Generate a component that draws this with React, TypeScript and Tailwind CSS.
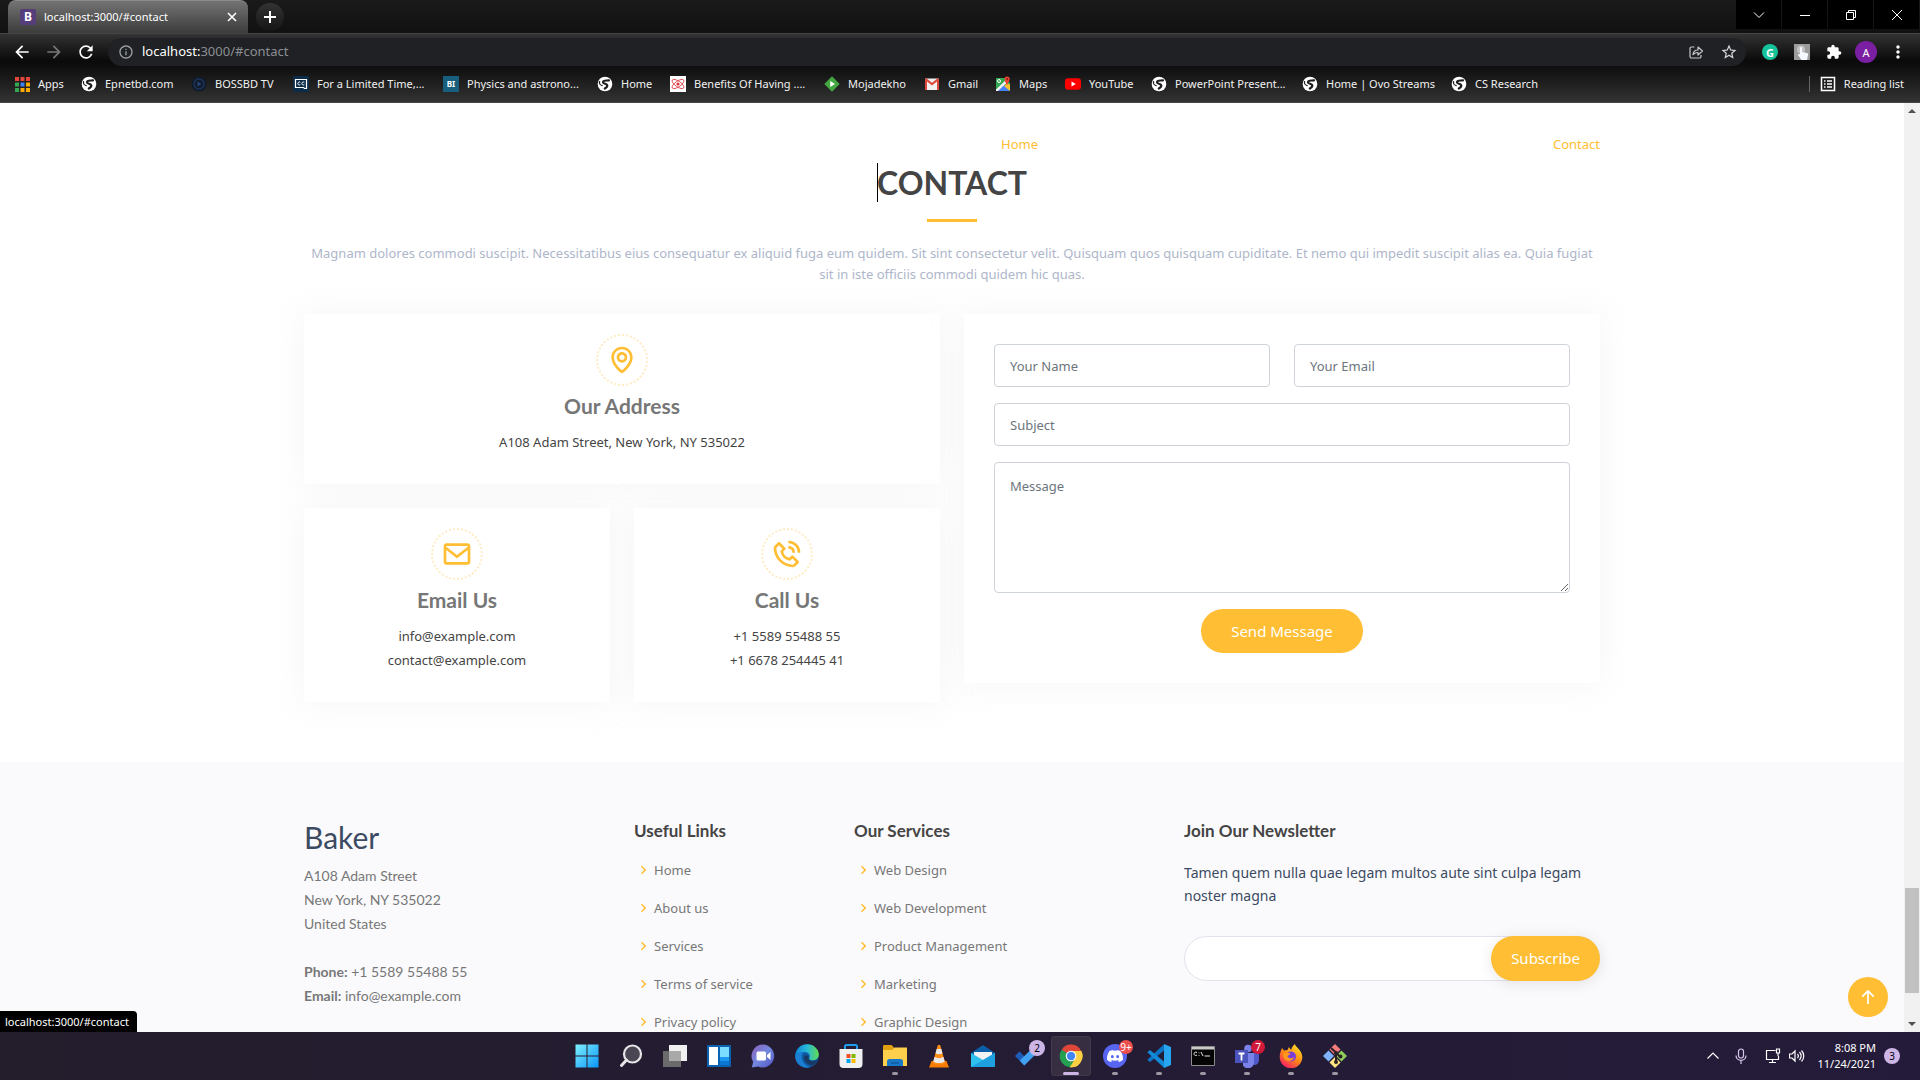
import type { ReactNode } from "react";
import { BiMap, BiEnvelope, BiPhoneCall, BiChevronRight } from "react-icons/bi";
import { BsArrowUpShort } from "react-icons/bs";
import { SiDiscord } from "react-icons/si";
import {
  MdArrowBack,
  MdArrowForward,
  MdExtension,
  MdInfoOutline,
  MdMoreVert,
  MdRefresh,
  MdStarBorder,
} from "react-icons/md";

/* ---------- bookmark icons ---------- */

const Globe = () => (
  <svg viewBox="0 0 16 16" className="size-4 shrink-0">
    <circle cx="8" cy="8" r="7.3" fill="#fff" />
    <path
      d="M12 4.300C9.500 4.800 6 3.800 6 6.200c0 2 4 1.100 4.300 3.200.2 1.500-1.100 2.300-2.500 3.100"
      fill="none"
      stroke="#1c1c1c"
      strokeWidth="2.200"
      strokeLinecap="round"
    />
    <path d="M2.600 5.500C2 8 3 9 5.200 9.600" fill="none" stroke="#1c1c1c" strokeWidth="1.200" strokeLinecap="round" />
  </svg>
);

const AppsGrid = () => (
  <svg viewBox="0 0 16 16" className="size-4 shrink-0">
    <path d="M1 1h4v4H1zM6.500 1h4v4h-4zM12 1h4v4h-4z" fill="#e8453c" />
    <path d="M1 6.500h4v4H1z" fill="#34a853" />
    <path d="M6.500 6.500h4v4h-4z" fill="#3b82f6" />
    <path d="M12 6.500h4v4h-4z" fill="#f9ab00" />
    <path d="M1 12h4v4H1z" fill="#34a853" />
    <path d="M6.500 12h4v4h-4zM12 12h4v4h-4z" fill="#f9ab00" />
  </svg>
);

const TvDisc = () => (
  <svg viewBox="0 0 16 16" className="size-4 shrink-0">
    <circle cx="8" cy="8" r="7.500" fill="#101a2b" />
    <circle cx="8" cy="8" r="5" fill="none" stroke="#1d3458" strokeWidth="1.500" />
    <path d="M6.500 5.500l4 2.500-4 2.500z" fill="#24477c" />
  </svg>
);

const CcBoard = () => (
  <svg viewBox="0 0 16 16" className="size-4 shrink-0">
    <rect width="16" height="16" rx="1" fill="#0d2c4a" />
    <path d="M2.500 3.500h11v9h-2l-1-1h-8z" fill="none" stroke="#fff" strokeWidth="1.200" />
    <path d="M7.300 6.300a1.500 1.500 0 1 0 0 2.400M11.300 6.300a1.500 1.500 0 1 0 0 2.400" fill="none" stroke="#fff" />
  </svg>
);

const BiSquare = () => (
  <span className="grid size-4 shrink-0 place-items-center bg-[#185f7d] text-[8px] leading-none font-bold text-white">
    BI
  </span>
);

const Atom = () => (
  <svg viewBox="0 0 16 16" className="size-4 shrink-0">
    <rect width="16" height="16" fill="#fff" />
    <g fill="none" stroke="#d9363e" strokeWidth=".8">
      <ellipse cx="8" cy="8" rx="7" ry="2.800" transform="rotate(35 8 8)" />
      <ellipse cx="8" cy="8" rx="7" ry="2.800" transform="rotate(-35 8 8)" />
    </g>
    <circle cx="8" cy="8" r="1.600" fill="#d9363e" />
  </svg>
);

const GreenDiamond = () => (
  <svg viewBox="0 0 16 16" className="size-4 shrink-0">
    <path d="M8 .3L15.700 8 8 15.700.3 8z" fill="#43a842" />
    <path d="M6.200 5l4.800 3-4.800 3z" fill="#fff" />
  </svg>
);

const Gmail = () => (
  <svg viewBox="0 0 16 16" className="size-4 shrink-0">
    <rect x="1" y="2.500" width="14" height="11.500" rx="1" fill="#f1f1f1" />
    <path d="M1 3.500V14h2V5.500l5 4 5-4V14h2V3.500c0-1-1.200-1.300-2-.7L8 6.800 3 2.800c-.8-.6-2-.3-2 .7z" fill="#dd4b3e" />
  </svg>
);

const Maps = () => (
  <svg viewBox="0 0 16 16" className="size-4 shrink-0">
    <path d="M1 2h10l4 5v8H1z" fill="#34a853" />
    <path d="M1 15L8.500 7.500 15 14v1z" fill="#4285f4" />
    <path d="M1 13.500L12 3l1.500 2L3 15H1z" fill="#f4f4f4" />
    <path d="M9 10l6 5V8.500l-3-1z" fill="#fbc02d" />
    <circle cx="4" cy="5" r="1.500" fill="none" stroke="#fff" />
    <path d="M12 9.500C11.500 7 9.500 6 9.500 3.200a2.600 2.600 0 0 1 5.200 0C14.700 6 12.500 7 12 9.500z" fill="#ea4335" />
    <circle cx="12.100" cy="3.200" r="1" fill="#8c1f16" />
  </svg>
);

const YouTube = () => (
  <svg viewBox="0 0 16 16" className="size-4 shrink-0">
    <rect y="2.300" width="16" height="11.500" rx="3" fill="#f00" />
    <path d="M6.500 5.500L10.800 8l-4.300 2.500z" fill="#fff" />
  </svg>
);

const bookmarks: { label: string; icon: ReactNode; width: string }[] = [
  { label: "Apps", icon: <AppsGrid />, width: "w-[67px]" },
  { label: "Epnetbd.com", icon: <Globe />, width: "w-[110px]" },
  { label: "BOSSBD TV", icon: <TvDisc />, width: "w-[102px]" },
  { label: "For a Limited Time,...", icon: <CcBoard />, width: "w-[150px]" },
  { label: "Physics and astrono...", icon: <BiSquare />, width: "w-[154px]" },
  { label: "Home", icon: <Globe />, width: "w-[73px]" },
  { label: "Benefits Of Having ....", icon: <Atom />, width: "w-[154px]" },
  { label: "Mojadekho", icon: <GreenDiamond />, width: "w-[100px]" },
  { label: "Gmail", icon: <Gmail />, width: "w-[71px]" },
  { label: "Maps", icon: <Maps />, width: "w-[70px]" },
  { label: "YouTube", icon: <YouTube />, width: "w-[86px]" },
  { label: "PowerPoint Present...", icon: <Globe />, width: "w-[151px]" },
  { label: "Home | Ovo Streams", icon: <Globe />, width: "w-[149px]" },
  { label: "CS Research", icon: <Globe />, width: "w-[110px]" },
];

/* ---------- browser frame ---------- */

const windowButtons = [
  { label: "Search tabs", path: "M1 3.500l5 5 5-5" },
  { label: "Minimize", path: "M1 6.500h10" },
  { label: "Restore", path: "M1.500 3.500h7v7h-7zM3.500 3.500v-2h7v7h-2" },
  { label: "Close", path: "M1 1l10 10M11 1L1 11" },
];

function TabStrip() {
  return (
    <div className="flex h-[33px] shrink-0 items-start bg-linear-to-b from-[#1a1a1a] to-[#111]">
      <div className="ml-2 flex h-[33px] w-60 items-center gap-2 rounded-t-lg border-t border-[#8a8a8a] bg-linear-to-b from-[#747474] to-[#3c3c3c] pr-2.5 pl-3">
        <span className="grid size-4 place-items-center rounded-xs bg-[#563d7c] text-xs leading-none font-bold text-white">
          B
        </span>
        <span className="flex-1 text-[11px] text-white">localhost:3000/#contact</span>
        <button aria-label="Close tab">
          <svg viewBox="0 0 12 12" className="size-3">
            <path d="M2 2l8 8M10 2l-8 8" stroke="#fff" strokeWidth="1.600" />
          </svg>
        </button>
      </div>
      <button aria-label="New tab" className="mt-[3px] ml-2 grid size-7 place-items-center rounded-full bg-linear-to-b from-[#333] to-[#161616]">
        <svg viewBox="0 0 12 12" className="size-3">
          <path d="M6 0v12M0 6h12" stroke="#fff" strokeWidth="2" />
        </svg>
      </button>
      <div className="mr-px ml-auto flex gap-px">
        {windowButtons.map((b) => (
          <button key={b.label} aria-label={b.label} className="grid h-[29px] w-[45px] place-items-center bg-black">
            <svg viewBox="0 0 12 12" className="size-3">
              <path d={b.path} fill="none" stroke="#fff" />
            </svg>
          </button>
        ))}
      </div>
    </div>
  );
}

function Toolbar() {
  return (
    <div className="flex h-[33px] shrink-0 items-center border-t border-[#444] bg-linear-to-b from-[#333] via-[#0a0a0a] via-85% to-[#0e0e0e] pt-1 text-white">
      <button aria-label="Back" className="ml-3">
        <MdArrowBack className="size-5" />
      </button>
      <button aria-label="Forward" className="ml-3 text-[#777]">
        <MdArrowForward className="size-5" />
      </button>
      <button aria-label="Reload" className="ml-3">
        <MdRefresh className="size-5" />
      </button>
      <div className="ml-3 flex h-7 flex-1 items-center rounded-full bg-[#202124] pr-2 pl-2.5">
        <MdInfoOutline className="size-4 text-[#9aa0a6]" />
        <p className="ml-2 flex-1 text-[13px] text-[#8b8f94]">
          <span className="text-white">localhost:</span>3000/#contact
        </p>
        <button aria-label="Share">
          <svg viewBox="0 0 16 16" className="size-4" fill="none" stroke="#c4c7cb" strokeWidth="1.200">
            <path d="M6.500 3H3.500A1.500 1.500 0 0 0 2 4.500v8A1.500 1.500 0 0 0 3.500 14h8a1.500 1.500 0 0 0 1.500-1.500V11" />
            <path d="M5 10.500c.3-3 2-4.500 5-4.500V3l4.500 4L10 11V8.500C8 8.500 6.500 9 5 10.500z" strokeLinejoin="round" />
          </svg>
        </button>
        <button aria-label="Bookmark this page" className="ml-4">
          <MdStarBorder className="size-[18px] text-[#d5d7da]" />
        </button>
      </div>
      <div className="flex items-center gap-4 pr-3.5 pl-4">
        <button aria-label="Writing assistant" className="grid size-4 place-items-center rounded-full bg-[#15c39a] text-[11px] leading-none font-bold">
          G
        </button>
        <button aria-label="Click extension">
          <svg viewBox="0 0 16 16" className="size-4">
            <rect width="16" height="16" fill="#9b9b9b" />
            <circle cx="7" cy="5.500" r="4" fill="#c4c4c4" />
            <path d="M6 4c0-1.500 2-1.500 2 0v4l5 1c1 .3 1.300 1 1 2l-1 5H7.500L4 11c-.5-1 .8-1.600 2-.5z" fill="#f5f8ff" />
          </svg>
        </button>
        <button aria-label="Extensions">
          <MdExtension className="size-4" />
        </button>
        <button aria-label="Profile" className="-mx-[3px] grid size-[22px] place-items-center rounded-full bg-[#7b1fa2] text-[11px] leading-none">
          A
        </button>
        <button aria-label="Menu" className="-mx-0.5">
          <MdMoreVert className="size-5" />
        </button>
      </div>
    </div>
  );
}

function BookmarksBar() {
  return (
    <div className="flex h-[37px] shrink-0 items-center border-b border-[#444] bg-linear-to-b from-[#0e0e0e] to-[#333] pl-3.5 text-[11px] text-[#f1f1f1]">
      {bookmarks.map((b, i) => (
        <a key={i} href="#contact" className={"flex shrink-0 items-center gap-2 whitespace-nowrap " + b.width}>
          {b.icon}
          {b.label}
        </a>
      ))}
      <button className="ml-auto flex items-center gap-2 border-l border-[#666] pr-4 pl-2.5 whitespace-nowrap">
        <svg viewBox="0 0 16 16" className="size-4" fill="none" stroke="#fff" strokeWidth="1.500">
          <path d="M1.500 1.500h13v13h-13z" />
          <path d="M4 5h1.500M4 8h1.500M4 11h1.500M7 5h5M7 8h5M7 11h5" />
        </svg>
        Reading list
      </button>
    </div>
  );
}

/* ---------- web page ---------- */

const card = "bg-white shadow-[0_0_30px_rgba(214,215,216,0.25)]";
const field =
  "w-full rounded border border-[#ced4da] bg-white px-[15px] text-[13px] text-[#444] placeholder:text-[#6c757d] focus:outline-none";

function InfoCard({ icon, title, lines, className }: { icon: ReactNode; title: string; lines: string[]; className?: string }) {
  return (
    <div className={card + " flex flex-col items-center pt-5 pb-[30px] " + (className ?? "")}>
      <span className="grid size-[52px] place-items-center rounded-full border-2 border-dotted border-[#ffecc2] text-[32px] text-[#ffbe33]">
        {icon}
      </span>
      <h3 className="mt-2 mb-3 font-[Lato] text-[21px] leading-6 font-bold text-[#777]">{title}</h3>
      {lines.map((l) => (
        <p key={l} className="text-[13px] leading-6">
          {l}
        </p>
      ))}
    </div>
  );
}

function LinkColumn({ title, links }: { title: string; links: string[] }) {
  return (
    <div>
      <h4 className="font-[Lato] text-[17px] leading-[18px] font-bold">{title}</h4>
      <ul className="mt-[21px] flex flex-col gap-5">
        {links.map((l) => (
          <li key={l} className="flex items-center">
            <BiChevronRight className="size-[18px] text-[#ffbe33]" />
            <a href="#contact" className="ml-0.5 text-[13px] leading-[18px] text-[#777]">
              {l}
            </a>
          </li>
        ))}
      </ul>
    </div>
  );
}

function ContactPage() {
  return (
    <div className="relative min-w-0 flex-1 overflow-hidden bg-white text-[#444]">
      <div className="mx-auto max-w-[1320px] px-3">
        <header className="flex justify-end pt-8">
          <nav className="flex w-[599px] justify-between text-[13px] leading-[18px] text-[#ffbe33]">
            <a href="#home">Home</a>
            <a href="#contact">Contact</a>
          </nav>
        </header>
        <section id="contact" className="pt-[11px] pb-[60px]">
          <h2 className="text-center font-[Lato] text-[32px] leading-[38px] font-bold">
            <span className="relative">
              <span className="absolute inset-y-0 left-0 w-px bg-black" />
              CONTACT
            </span>
          </h2>
          <div className="mx-auto mt-[17px] h-[3px] w-[50px] bg-[#ffbe33]" />
          <p className="mt-[21px] text-center text-[13px] leading-[21px] text-[#aeb6ca]">
            Magnam dolores commodi suscipit. Necessitatibus eius consequatur ex aliquid fuga eum quidem. Sit sint
            consectetur velit. Quisquam quos quisquam cupiditate. Et nemo qui impedit suscipit alias ea. Quia fugiat sit in
            iste officiis commodi quidem hic quas.
          </p>
          <div className="mt-[29px] grid grid-cols-2 items-start gap-6">
            <div className="grid grid-cols-2 gap-6">
              <InfoCard
                className="col-span-2"
                icon={<BiMap />}
                title="Our Address"
                lines={["A108 Adam Street, New York, NY 535022"]}
              />
              <InfoCard icon={<BiEnvelope />} title="Email Us" lines={["info@example.com", "contact@example.com"]} />
              <InfoCard icon={<BiPhoneCall />} title="Call Us" lines={["+1 5589 55488 55", "+1 6678 254445 41"]} />
            </div>
            <form className={card + " flex flex-col gap-4 p-[30px]"}>
              <div className="grid grid-cols-2 gap-6">
                <input aria-label="Your Name" placeholder="Your Name" className={field + " h-[43px]"} />
                <input aria-label="Your Email" type="email" placeholder="Your Email" className={field + " h-[43px]"} />
              </div>
              <input aria-label="Subject" placeholder="Subject" className={field + " h-[43px]"} />
              <textarea
                aria-label="Message"
                placeholder="Message"
                className={field + " block h-[131px] resize py-[13px] leading-[21px]"}
              />
              <button type="button" className="h-11 self-center rounded-full bg-[#ffbe33] px-[30px] text-[15px] text-white">
                Send Message
              </button>
            </form>
          </div>
        </section>
      </div>

      <footer className="bg-[#fafafc] pt-[60px] pb-10">
        <div className="mx-auto grid max-w-[1320px] grid-cols-12 gap-x-6 px-3">
          <div className="col-span-3 font-[Lato] text-sm leading-6 text-[#777]">
            <h3 className="mb-3 text-3xl leading-[30px] text-[#3c4a62]">Baker</h3>
            <p>
              A108 Adam Street
              <br />
              New York, NY 535022
              <br />
              United States
            </p>
            <p className="mt-6">
              <strong>Phone:</strong> +1 5589 55488 55
              <br />
              <strong>Email:</strong> info@example.com
            </p>
          </div>
          <div className="col-span-2">
            <LinkColumn title="Useful Links" links={["Home", "About us", "Services", "Terms of service", "Privacy policy"]} />
          </div>
          <div className="col-span-3">
            <LinkColumn
              title="Our Services"
              links={["Web Design", "Web Development", "Product Management", "Marketing", "Graphic Design"]}
            />
          </div>
          <div className="col-span-4">
            <h4 className="font-[Lato] text-[17px] leading-[18px] font-bold">Join Our Newsletter</h4>
            <p className="mt-[21px] text-sm leading-[23px] text-[#3c4a62]">
              Tamen quem nulla quae legam multos aute sint culpa legam noster magna
            </p>
            <form className="mt-[29px] flex h-[45px] rounded-full border border-[#e2e2ec] bg-white">
              <input type="email" aria-label="Newsletter email" className="min-w-0 flex-1 rounded-l-full px-4 focus:outline-none" />
              <button
                type="button"
                className="-my-px -mr-px rounded-full bg-[#ffbe33] px-5 text-[15px] text-white shadow-[0_2px_15px_rgba(0,0,0,0.1)]"
              >
                Subscribe
              </button>
            </form>
          </div>
        </div>
      </footer>

      <a
        href="#home"
        aria-label="Back to top"
        className="absolute right-4 bottom-[15px] grid size-10 place-items-center rounded-full bg-[#ffbe33] text-white"
      >
        <BsArrowUpShort className="size-7" />
      </a>
      <div className="absolute bottom-0 left-0 rounded-tr bg-black pr-2 pl-[5px] text-[11px] leading-[21px] text-white">
        localhost:3000/#contact
      </div>
    </div>
  );
}

function ScrollTrack() {
  return (
    <div className="flex w-4 shrink-0 flex-col items-center justify-between bg-[#f1f1f1] py-1">
      <svg viewBox="0 0 8 8" className="size-2">
        <path d="M0 6l4-4 4 4z" fill="#505050" />
      </svg>
      <div className="flex w-3.5 flex-1 flex-col justify-end pb-[27px]">
        <div className="h-[105px] bg-[#c1c1c1]" />
      </div>
      <svg viewBox="0 0 8 8" className="size-2">
        <path d="M0 2l4 4 4-4z" fill="#505050" />
      </svg>
    </div>
  );
}

/* ---------- taskbar ---------- */

const svg = "size-6";

const StartIcon = () => (
  <svg viewBox="0 0 24 24" className={svg}>
    <defs>
      <linearGradient id="start" x1="0" y1="0" x2="1" y2="1">
        <stop offset="0" stopColor="#7ff0fd" />
        <stop offset="1" stopColor="#0a96f8" />
      </linearGradient>
    </defs>
    <path d="M.5.5h11v11H.5zM12.500.5h11v11h-11zM.5 12.500h11v11H.5zM12.500 12.500h11v11h-11z" fill="url(#start)" />
  </svg>
);
const SearchIcon = () => (
  <svg viewBox="0 0 24 24" className={svg}>
    <circle cx="13.500" cy="10" r="8.500" fill="#4b4653" stroke="#e6e6e8" strokeWidth="2.200" />
    <path d="M7.500 16L2.500 21.500" stroke="#e6e6e8" strokeWidth="3" strokeLinecap="round" />
  </svg>
);
const TaskViewIcon = () => (
  <svg viewBox="0 0 24 24" className={svg}>
    <path d="M6 1h18v16H6z" fill="#f0f0f0" />
    <path d="M0 7h18v16H0z" fill="#6b6b6b" />
    <path d="M6 7h12v10H6z" fill="#a9a9a9" />
  </svg>
);
const WidgetsIcon = () => (
  <svg viewBox="0 0 24 24" className={svg}>
    <rect y="1" width="24" height="22" rx="1" fill="#0b62b0" />
    <path d="M2 3h9v18H2z" fill="#fff" />
    <path d="M13 3h9v10h-9z" fill="#7cdcff" />
    <path d="M13 13h9v4h-9z" fill="#1a98f0" />
    <path d="M13 17h9v4h-9z" fill="#0d78d4" />
  </svg>
);
const ChatIcon = () => (
  <svg viewBox="0 0 24 24" className={svg}>
    <defs>
      <linearGradient id="chat" x1="0" y1="0" x2="1" y2="1">
        <stop offset="0" stopColor="#8f5fb8" />
        <stop offset=".5" stopColor="#7388e0" />
        <stop offset="1" stopColor="#4f52c0" />
      </linearGradient>
    </defs>
    <path d="M12 .5A11.500 11.500 0 1 1 7 22.500L.8 23.500 2.200 18A11.500 11.500 0 0 1 12 .5z" fill="url(#chat)" />
    <rect x="5.500" y="7.500" width="9.500" height="9" rx="1.500" fill="#fff" />
    <path d="M16 11l3.500-3v8L16 13z" fill="#fff" />
  </svg>
);
const EdgeIcon = () => (
  <svg viewBox="0 0 24 24" className={svg}>
    <defs>
      <linearGradient id="edge" x1="0" y1="0" x2="1" y2="0">
        <stop offset="0" stopColor="#0f86d6" />
        <stop offset=".5" stopColor="#28b8d8" />
        <stop offset="1" stopColor="#62dc50" />
      </linearGradient>
    </defs>
    <circle cx="12" cy="12" r="11.800" fill="#0c59a4" />
    <path d="M.3 11C1.500 4 6.500.2 12 .2c7 0 11.800 5 11.800 10 0 4-3 6-6.300 6-3 0-4-1.300-3.200-2.400C16 11 13 8 9.500 8 5 8 1.500 10 .3 14z" fill="url(#edge)" />
    <path d="M.2 12C1.500 8.500 5.500 7.500 9.500 8 6 9.500 6 14 8 17.500c1.500 2.800 4 4.800 7 5.700C8 25.200.2 20.500.2 12z" fill="#1b7fd4" />
    <path d="M14 13.800c-1.500 1.200.5 3.800 4.500 3.200 2-.3 3.600-1 4.500-1.500-1 2.500-3 4.800-5.500 6C12 21 8.500 17 9 12.500c.8-1.500 3.500-2 5 1.300z" fill="#241d2f" opacity=".55" />
  </svg>
);
const StoreIcon = () => (
  <svg viewBox="0 0 24 24" className={svg}>
    <path d="M6 6V2.500C6 1.500 6.500 1 7.500 1h9c1 0 1.500.5 1.500 1.500V6" fill="none" stroke="#1e9df0" strokeWidth="2" />
    <path d="M.5 5h23v15a4 4 0 0 1-4 4h-15a4 4 0 0 1-4-4z" fill="#f0f0f0" />
    <path d="M7.500 10h4v4h-4z" fill="#f25022" />
    <path d="M12.500 10h4v4h-4z" fill="#7fba00" />
    <path d="M7.500 15h4v4h-4z" fill="#00a4ef" />
    <path d="M12.500 15h4v4h-4z" fill="#ffb900" />
  </svg>
);
const FolderIcon = () => (
  <svg viewBox="0 0 24 24" className={svg}>
    <path d="M0 2.500C0 1.500.5 1 1.500 1h7l2.500 2.500V8H0z" fill="#e0a010" />
    <path d="M0 6h9l2.500-2.500H24V22H0z" fill="#fdd04c" />
    <path d="M4 22v-4.500c0-1.500 1-2.500 2.500-2.500h11c1.500 0 2.500 1 2.500 2.500V22z" fill="#1779c8" />
    <path d="M8 18.500h8v1H8z" fill="#0b4f8f" />
  </svg>
);
const ConeIcon = () => (
  <svg viewBox="0 0 24 24" className={svg}>
    <path d="M4.500 17h15l2.500 6.500H2z" fill="#f57c00" />
    <path d="M10.800 1h2.400l5 18c-3 2-9.400 2-12.400 0z" fill="#ff8c14" />
    <path d="M9.700 5h4.600l1.200 4.500c-2 1-5 1-7 0zM7.500 13c3 1.500 6 1.500 9 0l1.200 4.500c-3 2-8.400 2-11.400 0z" fill="#e8e8e8" />
  </svg>
);
const MailIcon = () => (
  <svg viewBox="0 0 24 24" className={svg}>
    <path d="M0 9l12-8 12 8v5H0z" fill="#0b5ea8" />
    <path d="M3 8h18v8H3z" fill="#f2f2f2" />
    <path d="M0 9l12 7L24 9v14H0z" fill="#2fc0ee" />
    <path d="M0 23L24 9v14z" fill="#1ea0e0" />
  </svg>
);
const TodoIcon = () => (
  <svg viewBox="0 0 24 24" className={svg}>
    <path d="M0 12l4.500-4.500 9 9L9 21.500z" fill="#1e5cba" />
    <path d="M4.800 16.500L17 4.500 22 9 9.300 21.500z" fill="#42a1f0" />
  </svg>
);
const ChromeIcon = () => (
  <svg viewBox="0 0 24 24" className={svg}>
    <path d="M12 12L2.500 6A11.200 11.200 0 0 1 22.200 7z" fill="#e0463a" />
    <path d="M12 12L2.500 6A11.200 11.200 0 0 0 11 23.200z" fill="#23a052" />
    <path d="M12 12L11 23.200A11.200 11.200 0 0 0 22.200 7H12z" fill="#fdd043" />
    <path d="M2.500 6l5 8.500L12 12zM11 23.200l5.500-9L12 12z" fill="#23a052" />
    <path d="M22.200 7H12v5l4.500 2.500L11 23.200A11.200 11.200 0 0 0 22.200 7z" fill="#fdd043" />
    <circle cx="12" cy="12" r="5.300" fill="#fff" />
    <circle cx="12" cy="12" r="4.200" fill="#4285f4" />
  </svg>
);
const DiscordIcon = () => (
  <span className="grid size-6 place-items-center rounded-full bg-[#5865f2] text-white">
    <SiDiscord className="size-4" />
  </span>
);
const CodeIcon = () => (
  <svg viewBox="0 0 24 24" className={svg}>
    <path d="M17 0l7 3v18l-7 3z" fill="#27a5ee" />
    <path d="M17 .2v6.300L3 18 .3 15.800z" fill="#0b74c4" />
    <path d="M17 23.800v-6.300L3 6 .3 8.200z" fill="#1389d8" />
  </svg>
);
const TerminalIcon = () => (
  <svg viewBox="0 0 24 24" className={svg}>
    <path d="M.5 2.500h23v19H.5z" fill="#050505" stroke="#8c8c8c" />
    <path d="M1 3h22v2.500H1z" fill="#c9c9c9" />
    <path d="M6 8.500c-2-1-3 .2-3 1.300s1 2.300 3 1.300M8 8.500v.8M8 11v.8M10 8l2 4M13.500 12H19" fill="none" stroke="#e8e8e8" />
  </svg>
);
const TeamsIcon = () => (
  <svg viewBox="0 0 24 24" className={svg}>
    <circle cx="13" cy="4.500" r="3.800" fill="#7b83eb" />
    <circle cx="20.500" cy="6" r="2.500" fill="#5059c9" />
    <path d="M16 9h8v7c0 3-2 5-5 5z" fill="#5059c9" />
    <path d="M8 9h11v8.500a6 6 0 0 1-11 4z" fill="#7b83eb" />
    <path d="M0 6h13v13H0z" fill="#4b53bc" />
    <path d="M3.500 9.500h6M6.500 9.500v7" stroke="#fff" strokeWidth="1.800" />
  </svg>
);
const FirefoxIcon = () => (
  <svg viewBox="0 0 24 24" className={svg}>
    <defs>
      <linearGradient id="fox" x1=".8" y1="0" x2=".2" y2="1">
        <stop offset="0" stopColor="#ffe226" />
        <stop offset=".5" stopColor="#ff8a16" />
        <stop offset="1" stopColor="#f5156c" />
      </linearGradient>
    </defs>
    <path d="M3 4l2 2.500L8.500 6 10 3l2 3c1-3 2-4.500 4-6 0 3 7.300 6 7.300 13A11.300 11.300 0 0 1 .7 13C.7 9 2 6.500 3 4z" fill="url(#fox)" />
    <circle cx="12" cy="12.500" r="5" fill="#7a3fd8" />
    <path d="M4 10c3-2 5-1 7.500-.5C11 11 9 11 8.500 12.500c1 2.500 5 2 6.500.5-.5 4-6 5.500-9 2.500C4.500 14 4 12 4 10z" fill="#ff9a1c" />
  </svg>
);
const GitIcon = () => (
  <svg viewBox="0 0 24 24" className={svg}>
    <path d="M12 0l5.500 5.500L12 11 6.500 5.500z" fill="#f47c7c" />
    <path d="M5.500 6.500L11 12l-5.500 5.500L0 12z" fill="#80b3ff" />
    <path d="M18.500 6.500L24 12l-5.500 5.500L13 12z" fill="#8ecf5a" />
    <path d="M12 13l5.500 5.500L12 24l-5.500-5.500z" fill="#ffe680" />
    <path d="M8 4l5 4.500v10M13 9l4.500 4" fill="none" stroke="#2b2024" strokeWidth="2" />
    <circle cx="13" cy="18" r="2" fill="#2b2024" />
    <circle cx="17.500" cy="12.500" r="2" fill="#2b2024" />
    <circle cx="13" cy="9" r="2" fill="#2b2024" />
  </svg>
);

type Task = { name: string; icon: ReactNode; running?: boolean; active?: boolean; badge?: string; badgeStyle?: string };

const tasks: Task[] = [
  { name: "Start", icon: <StartIcon /> },
  { name: "Search", icon: <SearchIcon /> },
  { name: "Task view", icon: <TaskViewIcon /> },
  { name: "Widgets", icon: <WidgetsIcon /> },
  { name: "Chat", icon: <ChatIcon /> },
  { name: "Edge", icon: <EdgeIcon /> },
  { name: "Store", icon: <StoreIcon /> },
  { name: "File Explorer", icon: <FolderIcon />, running: true },
  { name: "VLC", icon: <ConeIcon /> },
  { name: "Mail", icon: <MailIcon /> },
  { name: "To Do", icon: <TodoIcon />, badge: "2", badgeStyle: "size-4 bg-[#cdb6e6] text-black" },
  { name: "Chrome", icon: <ChromeIcon />, active: true },
  { name: "Discord", icon: <DiscordIcon />, running: true, badge: "9+", badgeStyle: "size-3.5 bg-[#ed4f4f] text-white" },
  { name: "VS Code", icon: <CodeIcon />, running: true },
  { name: "Command Prompt", icon: <TerminalIcon />, running: true },
  { name: "Teams", icon: <TeamsIcon />, running: true, badge: "7", badgeStyle: "size-3.5 bg-[#d1193a] text-white" },
  { name: "Firefox", icon: <FirefoxIcon />, running: true },
  { name: "Git Bash", icon: <GitIcon />, running: true },
];

function Taskbar() {
  return (
    <div className="grid h-12 shrink-0 grid-cols-[1fr_auto_1fr] items-center bg-linear-to-r from-[#241d2c] to-[#241b3a]">
      <div className="col-start-2 flex gap-1 pl-0.5">
        {tasks.map((t) => (
          <button
            key={t.name}
            aria-label={t.name}
            className={"relative grid size-10 place-items-center rounded " + (t.active ? "bg-[#372f41] ring-1 ring-[#413a4a] ring-inset" : "")}
          >
            {t.icon}
            {t.running && <span className="absolute bottom-px left-[17px] h-[3px] w-1.5 rounded-full bg-[#9c97a3]" />}
            {t.active && <span className="absolute bottom-px left-3 h-[3px] w-4 rounded-full bg-[#cdb6e6]" />}
            {t.badge && (
              <span className={"absolute top-1 right-0.5 grid place-items-center rounded-full text-[10px] leading-none " + t.badgeStyle}>
                {t.badge}
              </span>
            )}
          </button>
        ))}
      </div>
      <div className="flex items-center justify-end gap-2 pr-5 text-white">
        <svg viewBox="0 0 16 16" className="mr-1 size-4" fill="none" stroke="#fff" strokeWidth="1.200">
          <path d="M2.500 10.500L8 5l5.500 5.500" />
        </svg>
        <svg viewBox="0 0 16 16" className="mr-2 size-4" fill="none" stroke="#d8c6ea" strokeWidth="1.200">
          <rect x="5.500" y="1" width="5" height="9" rx="2.500" />
          <path d="M3 7.500c0 6.500 10 6.500 10 0M8 12.500V16" />
        </svg>
        <svg viewBox="0 0 16 16" className="size-4" fill="none" stroke="#fff" strokeWidth="1.200">
          <path d="M10.500 2.500H1.500v9h12V8M4 14.500h7M7.500 11.500v3M11.500 1h3v4h-3zM13 5v3" />
        </svg>
        <svg viewBox="0 0 16 16" className="mr-1 size-4" fill="none" stroke="#fff" strokeWidth="1.200">
          <path d="M.5 6h2.500l3-3v10l-3-3H.5zM8.500 6c1 1.200 1 2.800 0 4M10.500 4c2 2.400 2 5.600 0 8M12.500 2.500c3 3 3 8 0 11" />
        </svg>
        <p className="text-right text-[11px] leading-4">
          8:08 PM
          <br />
          11/24/2021
        </p>
        <span className="grid size-4 place-items-center rounded-full bg-[#cdb6e6] text-[10px] leading-none text-black">3</span>
      </div>
    </div>
  );
}

export default function App() {
  return (
    <div className="flex h-screen flex-col overflow-hidden font-['Noto_Sans',sans-serif]">
      <TabStrip />
      <Toolbar />
      <BookmarksBar />
      <div className="flex min-h-0 flex-1">
        <ContactPage />
        <ScrollTrack />
      </div>
      <Taskbar />
    </div>
  );
}
